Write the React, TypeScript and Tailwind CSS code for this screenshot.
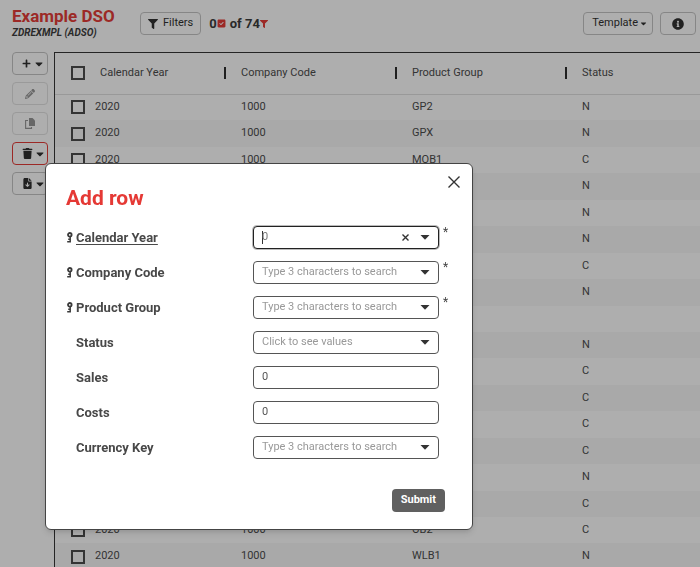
import React, { useState } from 'react';
import { FaCaretDown, FaFilter, FaInfoCircle, FaPlus, FaTrash } from 'react-icons/fa';
import { FaFileArrowDown, FaPencil, FaSquareCheck } from 'react-icons/fa6';

const rows = [
  ['2020', '1000', 'GP2', 'N'],
  ['2020', '1000', 'GPX', 'N'],
  ['2020', '1000', 'MOB1', 'C'],
  ['', '', '', 'N'],
  ['', '', '', 'N'],
  ['', '', '', 'N'],
  ['', '', '', 'C'],
  ['', '', '', 'N'],
  ['', '', '', ''],
  ['', '', '', 'N'],
  ['', '', '', 'C'],
  ['', '', '', 'C'],
  ['', '', '', 'C'],
  ['', '', '', 'C'],
  ['', '', '', 'N'],
  ['', '', '', 'C'],
  ['2020', '1000', 'OB2', 'C'],
  ['2020', '1000', 'WLB1', 'N'],
];

type Field = {
  id: string;
  label: string;
  kind: 'search' | 'select' | 'number';
  placeholder?: string;
  isKey?: boolean;
  active?: boolean;
};

const fields: Field[] = [
  { id: 'year', label: 'Calendar Year', kind: 'search', placeholder: '0', isKey: true, active: true },
  { id: 'company', label: 'Company Code', kind: 'search', placeholder: 'Type 3 characters to search', isKey: true },
  { id: 'product', label: 'Product Group', kind: 'search', placeholder: 'Type 3 characters to search', isKey: true },
  { id: 'status', label: 'Status', kind: 'select', placeholder: 'Click to see values' },
  { id: 'sales', label: 'Sales', kind: 'number' },
  { id: 'costs', label: 'Costs', kind: 'number' },
  { id: 'currency', label: 'Currency Key', kind: 'search', placeholder: 'Type 3 characters to search' },
];

const toolButton = 'flex h-[23px] items-center justify-center rounded border border-[#c4c4c4] text-[#2e2e2e]';
const checkbox = 'block size-[14px] appearance-none border-2 border-[#4a4a4a] checked:bg-[#4a4a4a]';

function KeyIcon() {
  return (
    <svg width="7" height="11" viewBox="0 0 7 11" fill="none" stroke="#3a3a3a" className="shrink-0">
      <circle cx="3.8" cy="2.8" r="1.8" strokeWidth="1.8" />
      <path d="M4.2 4.6V10.4M1.2 9.8H4.6M2.2 7.2H4.2" strokeWidth="1.5" />
    </svg>
  );
}

function CopyIcon() {
  return (
    <svg width="10" height="11" viewBox="0 0 10 11">
      <path d="M4 0H7.5L10 2.5V8H4Z" fill="#2e2e2e" />
      <path d="M3 2.5H0.6V10.4H6.5V9" fill="none" stroke="#2e2e2e" strokeWidth="1.1" />
    </svg>
  );
}

function Caret() {
  return (
    <svg width="10" height="5" viewBox="0 0 10 5" fill="#333">
      <path d="M0.5 0H9.5L5 4.8Z" />
    </svg>
  );
}

function Toolbar() {
  return (
    <nav className="flex w-9 shrink-0 flex-col gap-[7px]">
      <button aria-label="Add" className={`${toolButton} gap-[2px] pl-[7px]`}>
        <FaPlus size={9} />
        <FaCaretDown size={12} />
      </button>
      <button aria-label="Edit" className={`${toolButton} opacity-50`}>
        <FaPencil size={10} />
      </button>
      <button aria-label="Copy" className={`${toolButton} opacity-50`}>
        <CopyIcon />
      </button>
      <button
        aria-label="Delete"
        className="flex h-[23px] items-center justify-center gap-px rounded border border-[#e53935] pl-[7px] text-[#2e2e2e]"
      >
        <FaTrash size={11} />
        <FaCaretDown size={12} />
      </button>
      <button aria-label="Export" className={`${toolButton} gap-px pl-[7px]`}>
        <FaFileArrowDown size={11} />
        <FaCaretDown size={12} />
      </button>
    </nav>
  );
}

function DataTable() {
  const headers = ['Calendar Year', 'Company Code', 'Product Group', 'Status'];

  return (
    <table className="h-[517px] w-full table-fixed border-collapse text-left text-[11px] text-[#4a4a4a]">
      <colgroup>
        <col className="w-10" />
        <col className="w-[129px]" />
        <col className="w-[171px]" />
        <col className="w-[170px]" />
        <col />
      </colgroup>
      <thead>
        <tr className="h-[41px] border-b border-[#e0e0e0]">
          <th className="pl-4">
            <input type="checkbox" aria-label="Select all rows" className={checkbox} />
          </th>
          {headers.map((header, i) => (
            <th key={header} className="p-0 font-normal">
              <div className={i === 0 ? 'pl-[5px]' : 'border-l-2 border-[#2a2a2a] pl-[15px] leading-3'}>{header}</div>
            </th>
          ))}
        </tr>
      </thead>
      <tbody>
        {rows.map((row, i) => (
          <tr key={i} className="h-[26px] even:bg-[#f8f8f8]">
            <td className="py-0 pl-4">
              <input type="checkbox" aria-label={`Select row ${i + 1}`} className={checkbox} />
            </td>
            {row.map((cell, j) => (
              <td key={j} className={j === 0 ? 'p-0' : 'py-0 pl-[17px]'}>{cell}</td>
            ))}
          </tr>
        ))}
      </tbody>
    </table>
  );
}

function FieldControl({ field }: { field: Field }) {
  const [value, setValue] = useState(field.kind === 'number' ? '0' : '');
  const box = 'flex h-[23px] flex-1 min-w-0 items-center rounded border bg-white px-2';

  if (field.kind === 'number') {
    return (
      <div className={`${box} border-[#555]`}>
        <input
          id={field.id}
          inputMode="decimal"
          value={value}
          onChange={(e) => setValue(e.target.value)}
          className="w-full text-[11px] text-[#555] outline-none"
        />
      </div>
    );
  }

  if (field.kind === 'select') {
    return (
      <div className={`${box} border-[#555]`}>
        <select
          id={field.id}
          value={value}
          onChange={(e) => setValue(e.target.value)}
          className="min-w-0 flex-1 appearance-none text-[11px] text-[#999] outline-none"
        >
          <option value="">{field.placeholder}</option>
          <option value="N">N</option>
          <option value="C">C</option>
        </select>
        <Caret />
      </div>
    );
  }

  return (
    <div className={`${box} ${field.active ? 'border-[#222] ring-1 ring-[#bbb]' : 'border-[#555]'}`}>
      {field.active && <span className="-mr-px h-[13px] w-px bg-[#333]" />}
      <input
        id={field.id}
        role="combobox"
        aria-expanded={false}
        aria-controls={`${field.id}-list`}
        value={value}
        placeholder={field.placeholder}
        onChange={(e) => setValue(e.target.value)}
        className={`min-w-0 flex-1 text-[11px] text-[#555] outline-none ${field.active ? 'placeholder:text-[#777]' : 'placeholder:text-[#999]'}`}
      />
      {field.active && (
        <button type="button" aria-label="Clear" onClick={() => setValue('')} className="mr-[11px]">
          <svg width="7" height="7" viewBox="0 0 7 7" stroke="#333" strokeWidth="1.4">
            <path d="M0.5 0.5L6.5 6.5M6.5 0.5L0.5 6.5" />
          </svg>
        </button>
      )}
      <button type="button" aria-label={`Show ${field.label} values`}>
        <Caret />
      </button>
    </div>
  );
}

function AddRowDialog() {
  return (
    <div className="fixed inset-0 flex items-start bg-[#080808]/33 pt-[163px] pr-[227px] pl-[45px]">
      <form
        role="dialog"
        aria-labelledby="dialog-title"
        onSubmit={(e) => e.preventDefault()}
        className="min-w-0 flex-1 rounded-md border border-[#444] bg-white pt-3 pr-3 pb-[17px] pl-5 shadow-md"
      >
        <div className="flex justify-end">
          <button type="button" aria-label="Close" className="block">
            <svg width="12" height="12" viewBox="0 0 12 12" stroke="#333" strokeWidth="1.4">
              <path d="M0.5 0.5L11.5 11.5M11.5 0.5L0.5 11.5" />
            </svg>
          </button>
        </div>
        <h2 id="dialog-title" className="text-[21px] leading-5 font-bold text-[#e53935]">Add row</h2>
        <div className="mt-[18px] flex flex-col gap-3">
          {fields.map((field) => (
            <div key={field.id} className="flex pr-[9px]">
              <div className="flex w-[187px] shrink-0 items-center gap-[3px]">
                <span className="w-[7px]">{field.isKey && <KeyIcon />}</span>
                <label
                  htmlFor={field.id}
                  className={`text-[13px] leading-4 font-bold text-[#484848] ${field.active ? 'underline underline-offset-2' : ''}`}
                >
                  {field.label}
                </label>
              </div>
              <FieldControl field={field} />
              <span className="w-3 pl-1 text-xs leading-3 text-[#444]">{field.isKey && '*'}</span>
            </div>
          ))}
        </div>
        <div className="mt-[30px] flex justify-end pr-[15px]">
          <button className="h-[23px] rounded bg-[#606060] px-[9px] text-[11px] font-bold text-white">Submit</button>
        </div>
      </form>
    </div>
  );
}

export default function App() {
  return (
    <div className="flex h-screen flex-col overflow-hidden bg-white font-[Roboto,sans-serif] text-[#3a3a3a]">
      <header className="flex h-[52px] shrink-0 items-start pr-1 pl-3">
        <div className="w-32 pt-[6px]">
          <h1 className="text-[17px] leading-5 font-bold text-[#e53935]">Example DSO</h1>
          <p className="text-[10px] leading-[14px] font-bold italic">ZDREXMPL (ADSO)</p>
        </div>
        <div className="flex flex-1 items-center pt-3">
          <button className={`${toolButton} gap-[5px] px-[7px] text-[11px]`}>
            <FaFilter size={10} />
            Filters
          </button>
          <p className="ml-2 flex items-center text-[13px] leading-5 font-bold">
            0
            <FaSquareCheck size={9} className="text-[#e53935]" />
            <span className="ml-1">of 74</span>
            <FaFilter size={8} className="text-[#e53935]" />
          </p>
          <button className={`${toolButton} ml-auto gap-px pr-1 pl-2 text-[11px]`}>
            Template
            <FaCaretDown size={9} />
          </button>
          <button aria-label="Information" className={`${toolButton} ml-[7px] w-9`}>
            <FaInfoCircle size={12} />
          </button>
        </div>
      </header>
      <div className="flex min-h-0 flex-1 gap-[6px] pl-3">
        <Toolbar />
        <main className="min-w-0 flex-1 overflow-hidden border-t border-l border-[#333]">
          <DataTable />
        </main>
      </div>
      <AddRowDialog />
    </div>
  );
}
